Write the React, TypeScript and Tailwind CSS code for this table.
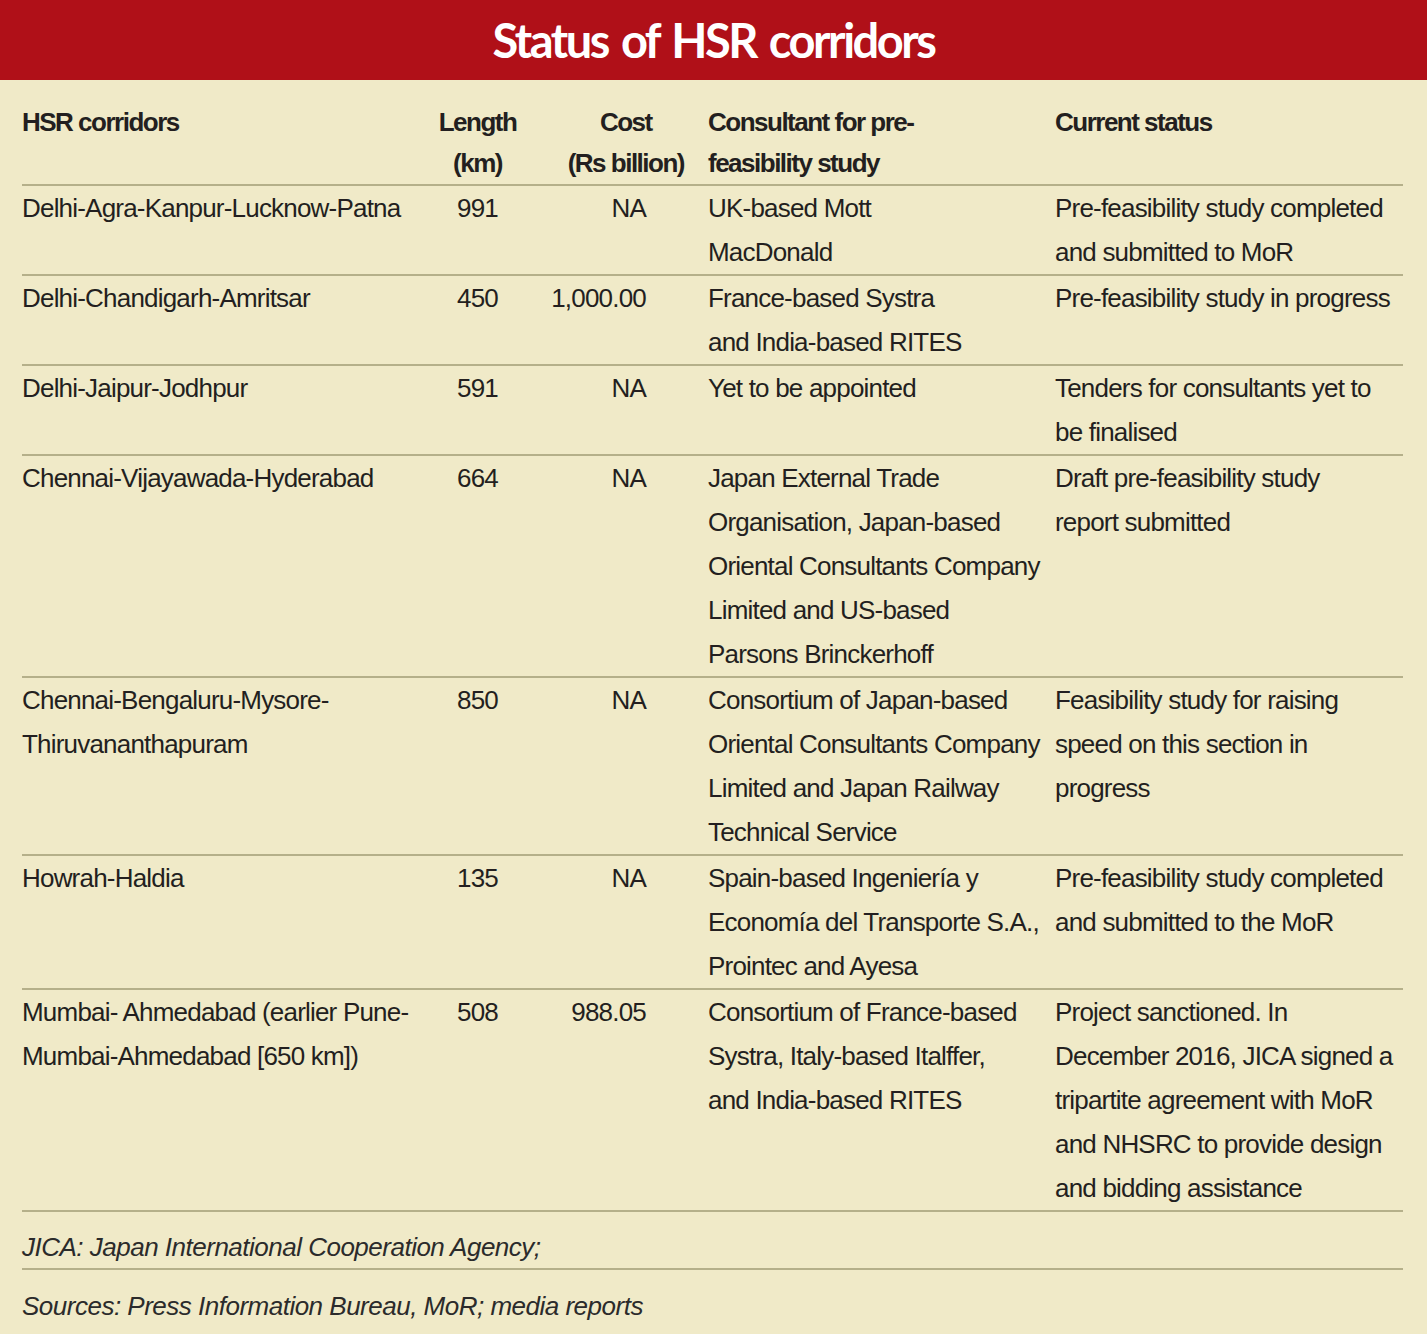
const rows: { name: string[]; len: string; cost: string; cons: string[]; status: string[] }[] = [
  {
    name: ["Delhi-Agra-Kanpur-Lucknow-Patna"],
    len: "991",
    cost: "NA",
    cons: ["UK-based Mott", "MacDonald"],
    status: ["Pre-feasibility study completed", "and submitted to MoR"],
  },
  {
    name: ["Delhi-Chandigarh-Amritsar"],
    len: "450",
    cost: "1,000.00",
    cons: ["France-based Systra", "and India-based RITES"],
    status: ["Pre-feasibility study in progress"],
  },
  {
    name: ["Delhi-Jaipur-Jodhpur"],
    len: "591",
    cost: "NA",
    cons: ["Yet to be appointed"],
    status: ["Tenders for consultants yet to", "be finalised"],
  },
  {
    name: ["Chennai-Vijayawada-Hyderabad"],
    len: "664",
    cost: "NA",
    cons: [
      "Japan External Trade",
      "Organisation, Japan-based",
      "Oriental Consultants Company",
      "Limited and US-based",
      "Parsons Brinckerhoff",
    ],
    status: ["Draft pre-feasibility study", "report submitted"],
  },
  {
    name: ["Chennai-Bengaluru-Mysore-", "Thiruvananthapuram"],
    len: "850",
    cost: "NA",
    cons: [
      "Consortium of Japan-based",
      "Oriental Consultants Company",
      "Limited and Japan Railway",
      "Technical Service",
    ],
    status: ["Feasibility study for raising", "speed on this section in", "progress"],
  },
  {
    name: ["Howrah-Haldia"],
    len: "135",
    cost: "NA",
    cons: ["Spain-based Ingeniería y", "Economía del Transporte S.A.,", "Prointec and Ayesa"],
    status: ["Pre-feasibility study completed", "and submitted to the MoR"],
  },
  {
    name: ["Mumbai- Ahmedabad (earlier Pune-", "Mumbai-Ahmedabad [650 km])"],
    len: "508",
    cost: "988.05",
    cons: ["Consortium of France-based", "Systra, Italy-based Italffer,", "and India-based RITES"],
    status: [
      "Project sanctioned. In",
      "December 2016, JICA signed a",
      "tripartite agreement with MoR",
      "and NHSRC to provide design",
      "and bidding assistance",
    ],
  },
];

function Lines({ lines }: { lines: string[] }) {
  return (
    <>
      {lines.map((l, i) => (
        <div key={i} className="whitespace-nowrap">
          {l}
        </div>
      ))}
    </>
  );
}

const grid = "grid grid-cols-[408px_95px_169px_361px_1fr]";

export default function App() {
  return (
    <div className="min-h-[1334px] w-[1427px] bg-[#f0eac8] font-['Liberation_Sans',Arial,sans-serif] text-[#231f20]">
      <div className="flex h-[80px] items-center justify-center bg-[#b01018]">
        <h1 className="font-['Lato',sans-serif] text-[47px] font-bold tracking-[-2.5px] text-white [word-spacing:4px]">
          Status of HSR corridors
        </h1>
      </div>
      <div className="px-[22px] pt-[22px] pr-[24px]">
        <div
          className={`${grid} border-b-2 border-[#b5b08a] text-[26px] font-bold leading-[41px] tracking-[-1.5px]`}
        >
          <div>HSR corridors</div>
          <div className="text-center">
            <div>Length</div>
            <div>(km)</div>
          </div>
          <div className="flex justify-end pr-[10px]">
            <div className="text-center">
              <div>Cost</div>
              <div>(Rs billion)</div>
            </div>
          </div>
          <div className="pl-[14px]">
            <div>Consultant for pre-</div>
            <div>feasibility study</div>
          </div>
          <div>Current status</div>
        </div>
        {rows.map((r, i) => (
          <div
            key={i}
            className={`${grid} border-b-2 border-[#b5b08a] text-[26px] leading-[44px] tracking-[-0.8px]`}
          >
            <div>
              <Lines lines={r.name} />
            </div>
            <div className="text-center">{r.len}</div>
            <div className="pr-[48px] text-right">{r.cost}</div>
            <div className="pl-[14px]">
              <Lines lines={r.cons} />
            </div>
            <div>
              <Lines lines={r.status} />
            </div>
          </div>
        ))}
        <div className="border-b-2 border-[#b5b08a] pt-[14px] text-[26px] italic leading-[42px] tracking-[-0.5px] text-[#2b2b2b]">
          JICA: Japan International Cooperation Agency;
        </div>
        <div className="pt-[15px] text-[26px] italic leading-[42px] tracking-[-0.5px] text-[#2b2b2b]">
          Sources: Press Information Bureau, MoR; media reports
        </div>
      </div>
    </div>
  );
}
